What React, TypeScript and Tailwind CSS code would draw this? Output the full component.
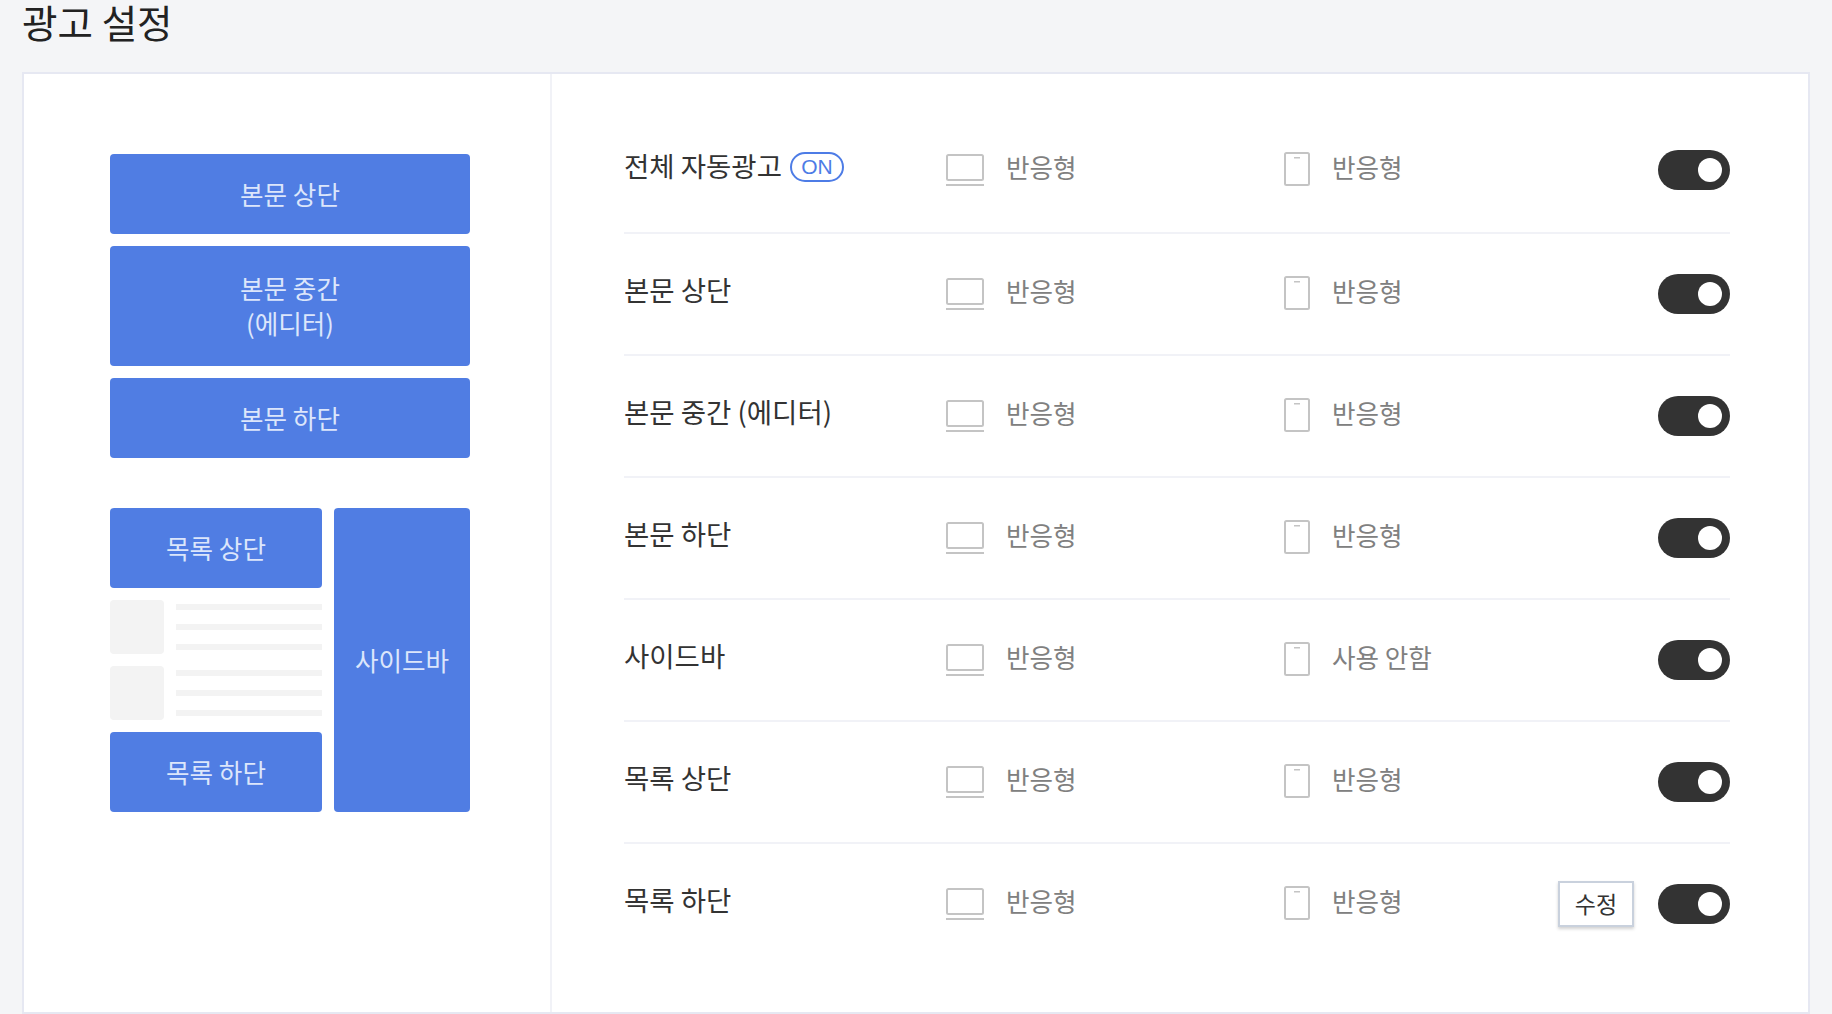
import { Fragment } from "react";

const FONT = "font-['Noto_Sans_CJK_KR','Noto_Sans',sans-serif]";

const rows = [
  { label: "전체 자동광고", badge: true, pc: "반응형", mobile: "반응형" },
  { label: "본문 상단", pc: "반응형", mobile: "반응형" },
  { label: "본문 중간 (에디터)", pc: "반응형", mobile: "반응형" },
  { label: "본문 하단", pc: "반응형", mobile: "반응형" },
  { label: "사이드바", pc: "반응형", mobile: "사용 안함" },
  { label: "목록 상단", pc: "반응형", mobile: "반응형" },
  { label: "목록 하단", pc: "반응형", mobile: "반응형", edit: true },
];

function LaptopIcon() {
  return (
    <svg width="38" height="32" viewBox="0 0 38 32" fill="none" className="shrink-0">
      <rect x="1" y="1" width="36" height="25" rx="1.5" stroke="#c4c4c4" strokeWidth="2" />
      <rect x="0" y="30" width="38" height="2" fill="#c4c4c4" />
    </svg>
  );
}

function TabletIcon() {
  return (
    <svg width="26" height="34" viewBox="0 0 26 34" fill="none" className="mb-[2px] shrink-0">
      <rect x="1" y="1" width="24" height="32" rx="1.5" stroke="#c4c4c4" strokeWidth="2" />
      <rect x="10" y="5" width="6" height="1.5" fill="#c4c4c4" />
    </svg>
  );
}

function Toggle() {
  return (
    <div className="flex h-10 w-[72px] items-center justify-end rounded-full bg-[#333333] pr-2">
      <div className="h-6 w-6 rounded-full bg-white" />
    </div>
  );
}

function Slot({ className, children }: { className: string; children: React.ReactNode }) {
  return (
    <div
      className={`flex items-center justify-center rounded-[4px] bg-[#507de3] pb-[2px] text-center text-[25.6px] leading-[35px] text-[#dce6fb] ${className}`}
    >
      {children}
    </div>
  );
}

function ListItem() {
  return (
    <div className="flex h-[54px] items-center gap-3">
      <div className="h-[54px] w-[54px] rounded-[4px] bg-[#f3f3f3]" />
      <div className="flex flex-1 flex-col gap-[14px]">
        <div className="h-[6px] bg-[#f3f3f3]" />
        <div className="h-[6px] bg-[#f3f3f3]" />
        <div className="h-[6px] bg-[#f3f3f3]" />
      </div>
    </div>
  );
}

export default function App() {
  return (
    <div className={`flex h-screen flex-col overflow-hidden bg-[#f4f5f7] px-[22px] ${FONT}`}>
      <h1 className="h-[72px] text-[38.6px] leading-[42px] font-normal text-[#222222]">광고 설정</h1>

      <div className="flex flex-1 border-2 border-[#e6e8f2] bg-white">
        {/* Ad position preview */}
        <div className="w-[528px] shrink-0 border-r-2 border-[#f1f2f7] pt-[80px] pl-[86px]">
          <div className="flex w-[360px] flex-col gap-3">
            <Slot className="h-20">본문 상단</Slot>
            <Slot className="h-[120px]">
              <span>
                본문 중간
                <br />
                (에디터)
              </span>
            </Slot>
            <Slot className="h-20">본문 하단</Slot>
          </div>

          <div className="mt-[50px] flex w-[360px] gap-3">
            <div className="flex w-[212px] flex-col gap-3">
              <Slot className="h-20">목록 상단</Slot>
              <ListItem />
              <ListItem />
              <Slot className="h-20">목록 하단</Slot>
            </div>
            <Slot className="w-[136px]">사이드바</Slot>
          </div>
        </div>

        {/* Ad settings list */}
        <div className="flex-1 pt-9 pr-[78px] pl-[72px]">
          {rows.map((row, i) => (
            <Fragment key={row.label}>
              {i > 0 && <div className="h-[2px] bg-[#f1f2f7]" />}
              <div className={i === 0 ? "flex h-[122px] items-center pb-[2px]" : "flex h-[120px] items-center"}>
                <div className="flex w-[322px] shrink-0 items-center gap-2 pb-[11px]">
                  <span className="text-[27.5px] leading-[40px] text-[#333333]">{row.label}</span>
                  {row.badge && (
                    <span className="mt-[5px] flex h-[30px] w-[54px] items-center justify-center rounded-full border-2 border-[#4d7ce6] font-['Liberation_Sans',sans-serif] text-[21px] text-[#4d7ce6]">
                      ON
                    </span>
                  )}
                </div>
                <div className="flex w-[338px] shrink-0 items-center gap-[22px]">
                  <LaptopIcon />
                  <span className="pb-[6px] text-[25.6px] text-[#808080]">{row.pc}</span>
                </div>
                <div className="flex flex-1 items-center gap-[22px]">
                  <TabletIcon />
                  <span className="pb-[6px] text-[25.6px] text-[#808080]">{row.mobile}</span>
                </div>
                <div className="flex items-center gap-6">
                  {row.edit && (
                    <button className="flex h-[46px] w-[76px] items-center justify-center border-2 border-[#c9d1dd] bg-white pb-[2px] text-[23px] text-[#333333] shadow-[0_2px_3px_rgba(0,0,0,0.18)]">
                      수정
                    </button>
                  )}
                  <Toggle />
                </div>
              </div>
            </Fragment>
          ))}
        </div>
      </div>
    </div>
  );
}
